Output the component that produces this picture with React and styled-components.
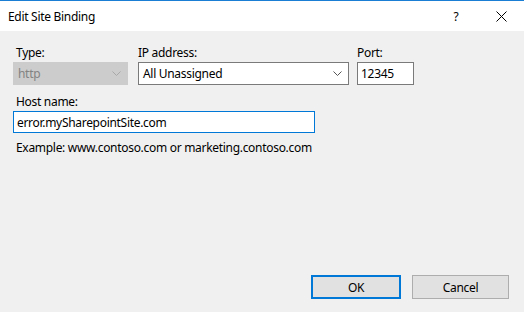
import React from "react";
import styled, { createGlobalStyle } from "styled-components";

const Global = createGlobalStyle`
  html, body { margin: 0; padding: 0; background: #f0f0f0; }
  * { box-sizing: border-box; }
`;

const Window = styled.div`
  width: 524px;
  height: 312px;
  display: flex;
  flex-direction: column;
  background: #f0f0f0;
  font-family: "Noto Sans", "Open Sans", sans-serif;
  font-size: 12px;
  letter-spacing: -0.3px;
  color: #000;
  overflow: hidden;
`;

const TitleBar = styled.div`
  height: 31px;
  flex: none;
  border-top: 1px solid #1a7fd4;
  background: #fff;
  display: flex;
  align-items: center;
  padding-left: 8px;
`;

const Title = styled.div`
  flex: 1;
  line-height: 16px;
  margin-top: 1px;
`;

const TitleButton = styled.div`
  width: ${(p) => p.$w}px;
  height: 30px;
  display: flex;
  align-items: center;
  justify-content: center;
`;

const Content = styled.div`
  flex: 1;
  display: flex;
  flex-direction: column;
  padding: 14px 0 0 13px;
`;

const FieldRow = styled.div`
  display: flex;
  align-items: flex-start;
`;

const Field = styled.div`
  display: flex;
  flex-direction: column;
  width: ${(p) => p.$w}px;
  margin-right: ${(p) => p.$mr || 0}px;
`;

const Label = styled.div`
  height: 17px;
  line-height: 16px;
  padding-left: ${(p) => p.$pl || 0}px;
`;

const Combo = styled.div`
  height: 23px;
  display: flex;
  align-items: center;
  justify-content: space-between;
  padding: 0 6px 0 4px;
  border: 1px solid ${(p) => (p.$disabled ? "#cccccc" : "#7a7a7a")};
  background: ${(p) => (p.$disabled ? "#cccccc" : "#fff")};
  color: ${(p) => (p.$disabled ? "#838383" : "#000")};
`;

const TextBox = styled.div`
  height: ${(p) => p.$h || 23}px;
  display: flex;
  align-items: center;
  padding-left: 3px;
  border: 1px solid ${(p) => (p.$focus ? "#0078d7" : "#7a7a7a")};
  background: #fff;
  width: ${(p) => p.$w}px;
`;

const HostLabel = styled(Label)`
  margin-top: 9px;
`;

const Example = styled.div`
  margin-top: 7px;
  padding-left: 3px;
  line-height: 16px;
`;

const Spacer = styled.div`
  flex: 1;
`;

const ButtonRow = styled.div`
  display: flex;
  justify-content: flex-end;
  gap: 11px;
  padding: 0 15px 13px 0;
`;

const Button = styled.div`
  width: ${(p) => p.$w}px;
  height: 24px;
  display: flex;
  align-items: center;
  justify-content: center;
  background: #e1e1e1;
  border: ${(p) => (p.$default ? "2px solid #0078d7" : "1px solid #adadad")};
`;

const Chevron = ({ color }) => (
  <svg width="9" height="5" viewBox="0 0 9 5">
    <path d="M0.5 0.5 L4.5 4.5 L8.5 0.5" fill="none" stroke={color} strokeWidth="1" />
  </svg>
);

export default function App() {
  return (
    <>
      <Global />
      <Window>
        <TitleBar>
          <Title>Edit Site Binding</Title>
          <TitleButton $w={44}>?</TitleButton>
          <TitleButton $w={46}>
            <svg width="11" height="11" viewBox="0 0 11 11">
              <path d="M0.5 0.5 L10.5 10.5 M10.5 0.5 L0.5 10.5" stroke="#000" strokeWidth="1" />
            </svg>
          </TitleButton>
        </TitleBar>
        <Content>
          <FieldRow>
            <Field $w={115} $mr={10}>
              <Label $pl={3}>Type:</Label>
              <Combo $disabled>
                <span>http</span>
                <Chevron color="#a8a8a8" />
              </Combo>
            </Field>
            <Field $w={211} $mr={8}>
              <Label>IP address:</Label>
              <Combo>
                <span>All Unassigned</span>
                <Chevron color="#555" />
              </Combo>
            </Field>
            <Field $w={57}>
              <Label>Port:</Label>
              <TextBox $w={57}>12345</TextBox>
            </Field>
          </FieldRow>
          <HostLabel $pl={3}>Host name:</HostLabel>
          <TextBox $w={302} $h={22} $focus>error.mySharepointSite.com</TextBox>
          <Example>Example: www.contoso.com or marketing.contoso.com</Example>
          <Spacer />
          <ButtonRow>
            <Button $w={90} $default>OK</Button>
            <Button $w={97}>Cancel</Button>
          </ButtonRow>
        </Content>
      </Window>
    </>
  );
}
